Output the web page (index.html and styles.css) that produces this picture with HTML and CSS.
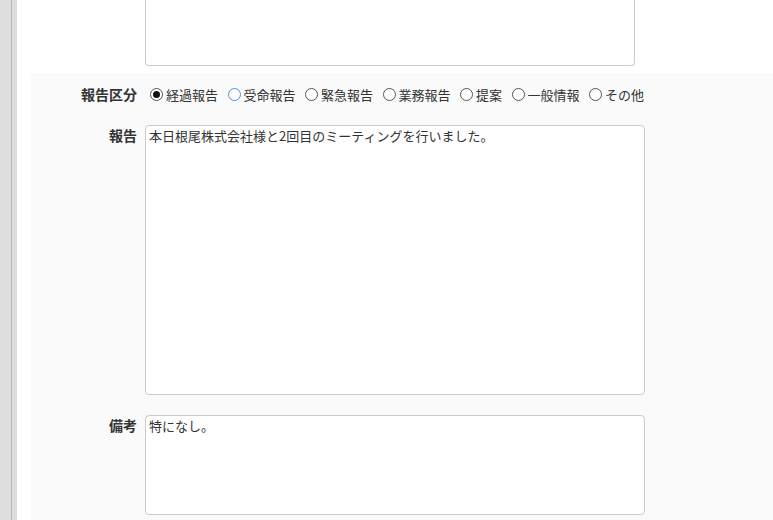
FILE: index.html
```html
<!DOCTYPE html>
<html lang="ja">
<head>
    <meta charset="UTF-8">
    <meta name="viewport" content="width=device-width, initial-scale=1.0">
    <title>報告書入力</title>
    <link rel="stylesheet" href="styles.css">
</head>
<body>
    <div class="page">
        <div class="sidebar"></div>
        <div class="main">
            <!-- previous field, scrolled mostly out of view -->
            <div class="prev-row">
                <textarea class="memo memo-prev" readonly></textarea>
            </div>

            <div class="form-section">
                <div class="form-label radio-label">報告区分</div>
                <div class="form-field radios">
                    <label class="radio"><input type="radio" name="kubun" checked>経過報告</label>
                    <label class="radio"><input type="radio" name="kubun" class="hover">受命報告</label>
                    <label class="radio"><input type="radio" name="kubun">緊急報告</label>
                    <label class="radio"><input type="radio" name="kubun">業務報告</label>
                    <label class="radio"><input type="radio" name="kubun">提案</label>
                    <label class="radio"><input type="radio" name="kubun">一般情報</label>
                    <label class="radio"><input type="radio" name="kubun">その他</label>
                </div>

                <div class="form-label">報告</div>
                <div class="form-field">
                    <textarea class="memo memo-report" readonly>本日根尾株式会社様と2回目のミーティングを行いました。</textarea>
                </div>

                <div class="form-label">備考</div>
                <div class="form-field">
                    <textarea class="memo memo-note" readonly>特になし。</textarea>
                </div>
            </div>
        </div>
    </div>
</body>
</html>
```

FILE: styles.css
```css
body {
    margin: 0;
    padding: 0;
    height: 100vh;
    overflow: hidden;
    font-family: "Noto Sans CJK JP", "Noto Sans", sans-serif;
    font-size: 13px;
    color: #333;
    background-color: #fff;
}

.page {
    display: flex;
    min-height: 100vh;
}

.sidebar {
    width: 17px;
    flex-shrink: 0;
    background: linear-gradient(to right, #dedede 0, #dedede 11px, #b9b9b9 11px, #b9b9b9 12px, #dedede 12px);
}

.main {
    flex: 1;
    display: flex;
    flex-direction: column;
    background-color: #fff;
}

.prev-row {
    height: 73px;
    padding-left: 128px;
    box-sizing: border-box;
}

.memo {
    display: block;
    box-sizing: border-box;
    width: 500px;
    margin: 0;
    padding: 2px 3px;
    border: 1px solid #cbcbcb;
    border-radius: 4px;
    background-color: #fff;
    font-family: inherit;
    font-size: 13px;
    line-height: 15px;
    color: #333;
    resize: none;
    outline: none;
}

.memo-prev {
    width: 490px;
    height: 66px;
    border-top: none;
    border-radius: 0 0 4px 4px;
}

.memo-report {
    height: 270px;
}

.memo-note {
    height: 100px;
}

.form-section {
    flex: 1;
    margin-left: 14px;
    padding-top: 11px;
    background-color: #fafafa;
    display: grid;
    grid-template-columns: 106px 500px;
    grid-auto-rows: min-content;
    column-gap: 8px;
    row-gap: 20px;
}

.form-label {
    text-align: right;
    font-size: 14px;
    font-weight: bold;
    line-height: 20px;
}

.radio-label {
    line-height: 21px;
}

.radios {
    display: flex;
    align-items: center;
    height: 21px;
}

.radio {
    display: flex;
    align-items: center;
    margin-right: 4.5px;
    line-height: 20px;
    white-space: nowrap;
}

.radio input {
    appearance: none;
    -webkit-appearance: none;
    box-sizing: border-box;
    width: 13px;
    height: 13px;
    margin: 0 3px 0 5px;
    border: 1px solid #555;
    border-radius: 50%;
    background-color: #fff;
    display: grid;
    place-content: center;
}

.radio input:checked::before {
    content: "";
    width: 7px;
    height: 7px;
    border-radius: 50%;
    background-color: #111;
}

.radio input.hover {
    border-color: #4a90e2;
}
```
